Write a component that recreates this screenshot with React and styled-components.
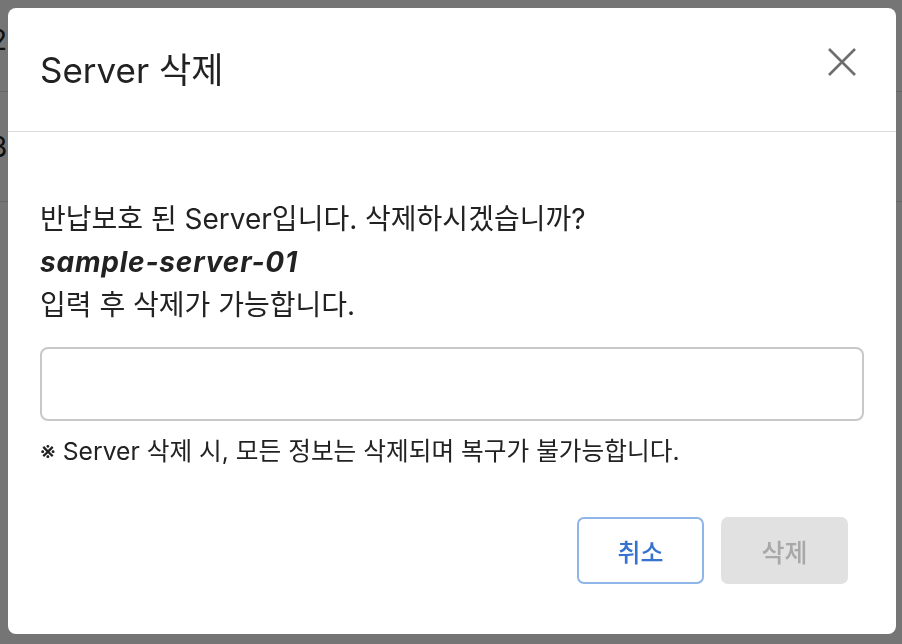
import React from "react";
import styled, { createGlobalStyle } from "styled-components";

const Global = createGlobalStyle`
  html, body { margin: 0; padding: 0; background: #fff; }
  body { font-family: Inter, "Noto Sans CJK KR", sans-serif; color: #222; }
  * { box-sizing: border-box; }
`;

const Page = styled.div`
  width: 902px;
  height: 644px;
  overflow: hidden;
`;

const Row = styled.div`
  height: ${(p) => p.$h}px;
  padding-bottom: ${(p) => p.$pb || 0}px;
  border-bottom: 1px solid #ddd;
  display: flex;
  align-items: center;
  font-size: 28px;
  color: #222;
  text-indent: -10px;
`;

const Overlay = styled.div`
  position: fixed;
  inset: 0;
  background: rgba(0, 0, 0, 0.54);
  display: flex;
  padding: 8px 6px 10px 8px;
`;

const Modal = styled.div`
  flex: 1;
  background: #fff;
  border-radius: 8px;
  display: flex;
  flex-direction: column;
  overflow: hidden;
`;

const Header = styled.div`
  height: 124px;
  flex: none;
  display: flex;
  align-items: center;
  justify-content: space-between;
  padding: 0 40px 0 32px;
  border-bottom: 1px solid #dcdcdc;
`;

const Title = styled.h2`
  margin: 0;
  font-size: 35px;
  font-weight: 400;
  line-height: 42px;
  color: #222;
`;

const CloseButton = styled.button`
  border: none;
  background: none;
  padding: 0;
  width: 28px;
  height: 28px;
  margin-top: -16px;
  cursor: pointer;
  display: flex;
`;

const Body = styled.div`
  padding: 66px 32px 0 32px;
  display: flex;
  flex-direction: column;
`;

const Line = styled.p`
  margin: 0;
  font-size: 28px;
  line-height: 43px;
  color: #222;
  font-weight: ${(p) => (p.$bold ? 700 : 400)};
  font-style: ${(p) => (p.$bold ? "italic" : "normal")};
  letter-spacing: ${(p) => (p.$bold ? "0.8px" : "0")};
`;

const Input = styled.input`
  margin-top: 20px;
  height: 74px;
  width: 100%;
  border: 2px solid #c8c8c8;
  border-radius: 8px;
  font-size: 26px;
  padding: 0 16px;
  outline: none;
  font-family: inherit;
`;

const Note = styled.p`
  margin: 15px 0 0 0;
  font-size: 24.7px;
  line-height: 30px;
  color: #222;
`;

const Footer = styled.div`
  display: flex;
  justify-content: flex-end;
  gap: 17px;
  padding: 51px 48px 0 0;
`;

const Button = styled.button`
  width: 127px;
  height: 67px;
  border-radius: 7px;
  font-family: inherit;
  font-size: 25px;
  font-weight: 500;
  cursor: ${(p) => (p.disabled ? "default" : "pointer")};
  border: ${(p) => (p.$variant === "outline" ? "2px solid #90b5e8" : "none")};
  background: ${(p) => (p.$variant === "outline" ? "#fff" : "#e1e1e1")};
  color: ${(p) => (p.$variant === "outline" ? "#3473cf" : "#a8a8a8")};
`;

export default function App() {
  return (
    <Page>
      <Global />
      <Row $h={92} $pb={12}>2</Row>
      <Row $h={110}>3</Row>
      <Overlay>
        <Modal role="dialog">
          <Header>
            <Title>Server 삭제</Title>
            <CloseButton aria-label="닫기">
              <svg width="28" height="28" viewBox="0 0 28 28">
                <path d="M1 1 L27 27 M27 1 L1 27" stroke="#6e6e6e" strokeWidth="2.6" fill="none" />
              </svg>
            </CloseButton>
          </Header>
          <Body>
            <Line>반납보호 된 Server입니다. 삭제하시겠습니까?</Line>
            <Line $bold>sample-server-01</Line>
            <Line>입력 후 삭제가 가능합니다.</Line>
            <Input />
            <Note>※ Server 삭제 시, 모든 정보는 삭제되며 복구가 불가능합니다.</Note>
          </Body>
          <Footer>
            <Button $variant="outline">취소</Button>
            <Button disabled>삭제</Button>
          </Footer>
        </Modal>
      </Overlay>
    </Page>
  );
}
